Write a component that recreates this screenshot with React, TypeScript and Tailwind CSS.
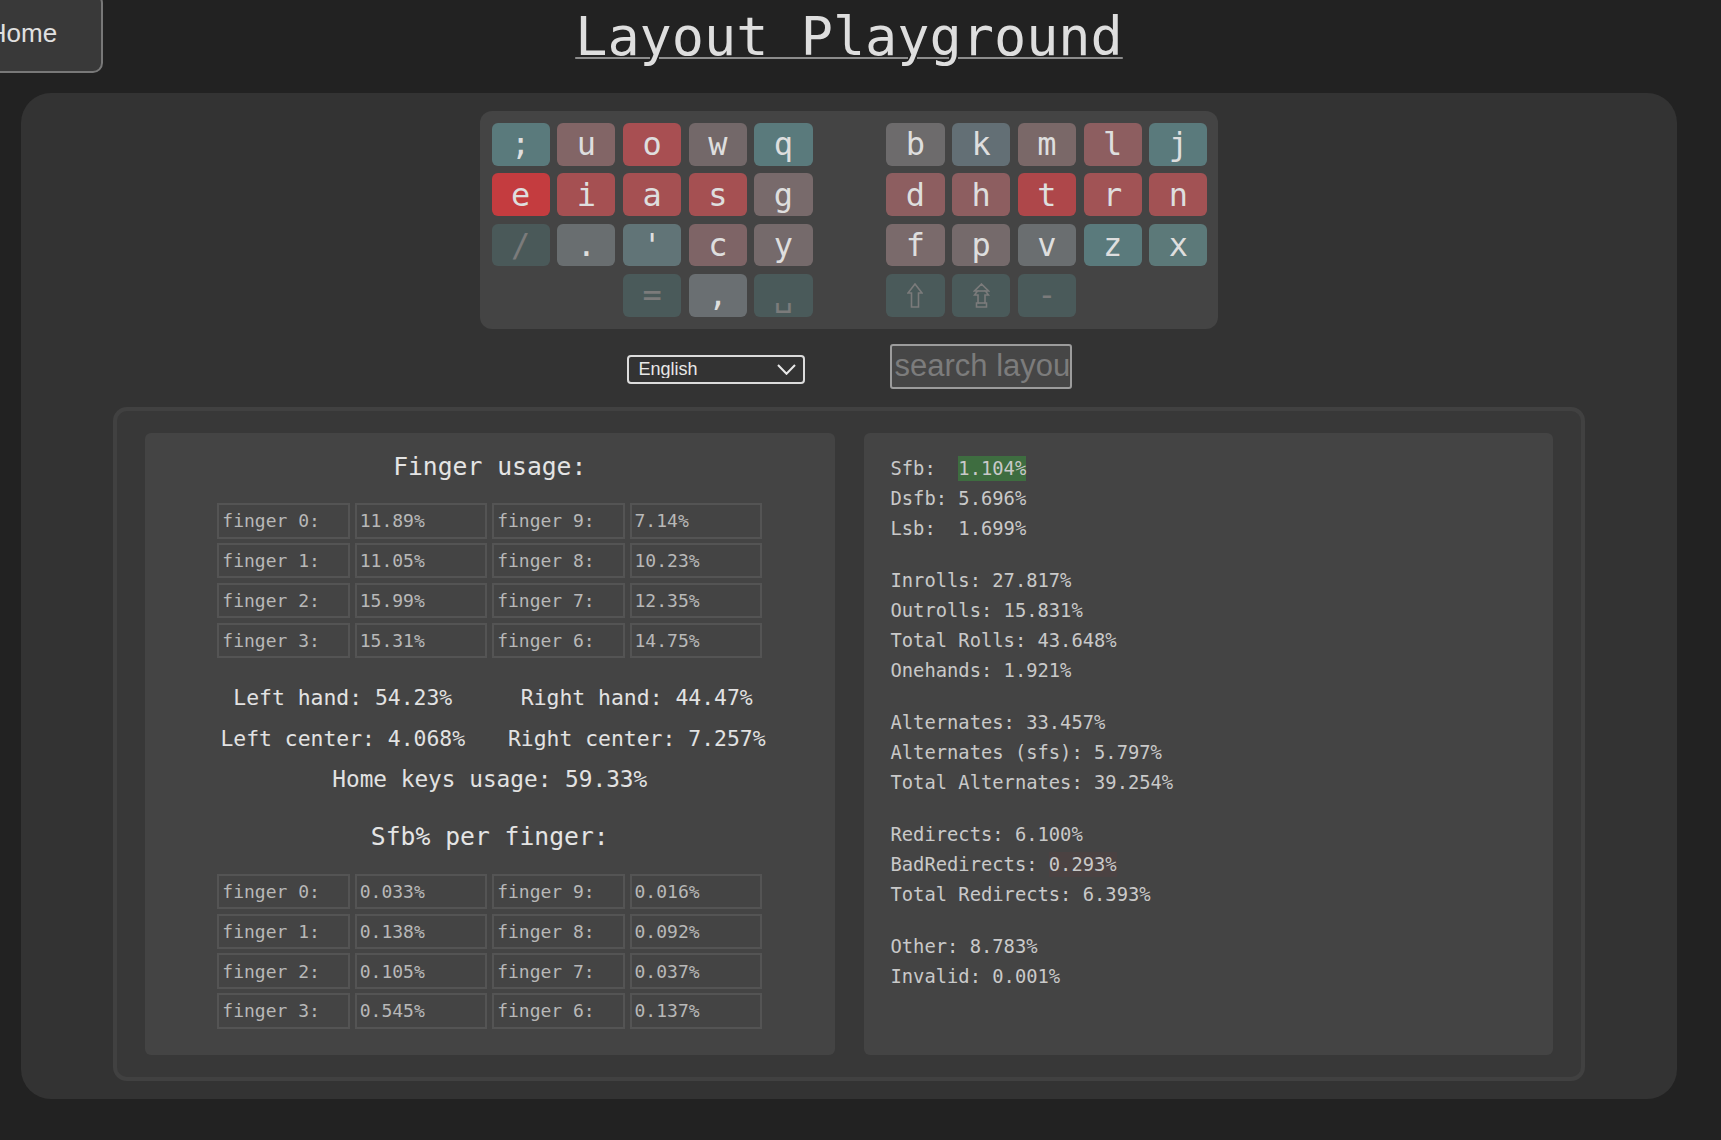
import React from 'react';

type Key = { c: React.ReactNode; bg: string; dim?: boolean } | null;

const ShiftIcon = () => (
  <svg width="16" height="25" viewBox="0 0 16 25" fill="none">
    <path d="M8 1 L15 10 H11.5 V24 H4.5 V10 H1 Z" stroke="#7b7b7b" strokeWidth="1.6" strokeLinejoin="miter" />
  </svg>
);

const CapsIcon = () => (
  <svg width="17" height="25" viewBox="0 0 17 25" fill="none">
    <path
      d="M8.5 1 L15.5 8 H12.5 L15.5 12 H12 V20 H13.5 V24 H3.5 V20 H5 V12 H1.5 L4.5 8 H1.5 Z"
      stroke="#7b7b7b"
      strokeWidth="1.6"
    />
    <path d="M4.5 8 H12.5" stroke="#7b7b7b" strokeWidth="1.6" />
    <path d="M5 20 H12" stroke="#7b7b7b" strokeWidth="1.6" />
  </svg>
);

const leftKeys: Key[][] = [
  [
    { c: ';', bg: 'bg-[#5a7a7c]' },
    { c: 'u', bg: 'bg-[#826566]' },
    { c: 'o', bg: 'bg-[#a84f52]' },
    { c: 'w', bg: 'bg-[#736869]' },
    { c: 'q', bg: 'bg-[#5a7a7c]' },
  ],
  [
    { c: 'e', bg: 'bg-[#c43c3f]' },
    { c: 'i', bg: 'bg-[#a55052]' },
    { c: 'a', bg: 'bg-[#a55052]' },
    { c: 's', bg: 'bg-[#a55052]' },
    { c: 'g', bg: 'bg-[#786a6b]' },
  ],
  [
    { c: '/', bg: 'bg-[#4a5959]', dim: true },
    { c: '.', bg: 'bg-[#696e70]' },
    { c: "'", bg: 'bg-[#617477]' },
    { c: 'c', bg: 'bg-[#7e6466]' },
    { c: 'y', bg: 'bg-[#756a6b]' },
  ],
  [
    null,
    null,
    { c: '=', bg: 'bg-[#4a5a5a]', dim: true },
    { c: ',', bg: 'bg-[#6a6f72]' },
    { c: '␣', bg: 'bg-[#4a5a5a]', dim: true },
  ],
];

const rightKeys: Key[][] = [
  [
    { c: 'b', bg: 'bg-[#6d6b6c]' },
    { c: 'k', bg: 'bg-[#636f75]' },
    { c: 'm', bg: 'bg-[#7a6868]' },
    { c: 'l', bg: 'bg-[#8d5e60]' },
    { c: 'j', bg: 'bg-[#5a7a7c]' },
  ],
  [
    { c: 'd', bg: 'bg-[#8d5e60]' },
    { c: 'h', bg: 'bg-[#8d5e60]' },
    { c: 't', bg: 'bg-[#ae474a]' },
    { c: 'r', bg: 'bg-[#a15355]' },
    { c: 'n', bg: 'bg-[#a25254]' },
  ],
  [
    { c: 'f', bg: 'bg-[#7a6a6b]' },
    { c: 'p', bg: 'bg-[#756a6b]' },
    { c: 'v', bg: 'bg-[#6a6e70]' },
    { c: 'z', bg: 'bg-[#5a7a7c]' },
    { c: 'x', bg: 'bg-[#5c7979]' },
  ],
  [
    { c: <ShiftIcon />, bg: 'bg-[#4a5a5a]', dim: true },
    { c: <CapsIcon />, bg: 'bg-[#4a5a5a]', dim: true },
    { c: '-', bg: 'bg-[#4a5a5a]', dim: true },
    null,
    null,
  ],
];

const usage = [
  ['finger 0:', '11.89%', 'finger 9:', '7.14%'],
  ['finger 1:', '11.05%', 'finger 8:', '10.23%'],
  ['finger 2:', '15.99%', 'finger 7:', '12.35%'],
  ['finger 3:', '15.31%', 'finger 6:', '14.75%'],
];

const sfbPerFinger = [
  ['finger 0:', '0.033%', 'finger 9:', '0.016%'],
  ['finger 1:', '0.138%', 'finger 8:', '0.092%'],
  ['finger 2:', '0.105%', 'finger 7:', '0.037%'],
  ['finger 3:', '0.545%', 'finger 6:', '0.137%'],
];

type Stat = { label: string; value: string; bg?: string };

const statGroups: Stat[][] = [
  [
    { label: 'Sfb:  ', value: '1.104%', bg: 'bg-[#3e6d40]' },
    { label: 'Dsfb: ', value: '5.696%' },
    { label: 'Lsb:  ', value: '1.699%' },
  ],
  [
    { label: 'Inrolls: ', value: '27.817%' },
    { label: 'Outrolls: ', value: '15.831%' },
    { label: 'Total Rolls: ', value: '43.648%' },
    { label: 'Onehands: ', value: '1.921%' },
  ],
  [
    { label: 'Alternates: ', value: '33.457%' },
    { label: 'Alternates (sfs): ', value: '5.797%' },
    { label: 'Total Alternates: ', value: '39.254%' },
  ],
  [
    { label: 'Redirects: ', value: '6.100%' },
    { label: 'BadRedirects: ', value: '0.293%', bg: 'bg-[#4b4242]' },
    { label: 'Total Redirects: ', value: '6.393%' },
  ],
  [
    { label: 'Other: ', value: '8.783%' },
    { label: 'Invalid: ', value: '0.001%' },
  ],
];

const KeyHalf = ({ rows }: { rows: Key[][] }) => (
  <div className="grid w-[321px] grid-cols-5 gap-x-[7.55px] gap-y-[7.6px]">
    {rows.flat().map((k, i) =>
      k ? (
        <div
          key={i}
          className={`flex h-[42.7px] items-center justify-center rounded-md text-[32px] leading-none ${k.bg} ${
            k.dim ? 'text-[#7b7b7b]' : 'text-[#dedede]'
          }`}
        >
          {k.c}
        </div>
      ) : (
        <div key={i} />
      )
    )}
  </div>
);

const FingerTable = ({ rows }: { rows: string[][] }) => (
  <div className="mx-auto grid w-fit grid-cols-[repeat(4,132.6px)] gap-x-[4.8px] gap-y-[4.5px]">
    {rows.flat().map((cell, i) => (
      <div
        key={i}
        className="flex h-[35.3px] items-center border-2 border-[#545454] pl-[3px] text-[18px] text-[#b8b8b8]"
      >
        {cell}
      </div>
    ))}
  </div>
);

export default function App() {
  return (
    <div className="min-h-screen w-full overflow-hidden bg-[#222222] font-['DejaVu_Sans_Mono',monospace]">
      <div className="ml-[21px] w-[1656px]">
        <header className="grid h-[93px] grid-cols-[1fr_auto_1fr]">
          <div>
            <button className="-ml-[79px] -mt-[7px] block h-[80px] w-[161px] rounded-[10px] border-2 border-[#787878] bg-[#393939] text-center font-['Liberation_Sans',Arial,sans-serif] text-[26px] text-[#e0e0e0]">
              Home
            </button>
          </div>
          <h1 className="mt-[10.4px] self-start text-[53.5px] leading-none text-[#dedede] underline decoration-[#8c8c8c] decoration-2 underline-offset-[2px]">
            Layout Playground
          </h1>
          <div />
        </header>

        <main className="rounded-[30px] bg-[#333333] px-[92px] py-[18px]">
          <div className="mx-auto flex w-fit gap-[73.8px] rounded-xl bg-[#444444] py-[12px] pl-[12px] pr-[11px]">
            <KeyHalf rows={leftKeys} />
            <KeyHalf rows={rightKeys} />
          </div>

          <div className="mb-[18px] mt-[15.7px] flex h-[44.4px] items-start justify-center gap-[85px] font-['Liberation_Sans',Arial,sans-serif]">
            <div className="relative mt-[10.7px] h-[28.7px] w-[178px]">
              <select className="h-full w-full appearance-none rounded-[4px] border-2 border-[#dcdcdc] bg-transparent pl-[10px] text-[18px] leading-none text-[#e8e8e8] outline-none">
                <option>English</option>
              </select>
              <svg
                className="pointer-events-none absolute right-[9px] top-[9px]"
                width="19"
                height="11"
                viewBox="0 0 19 11"
                fill="none"
              >
                <polyline points="1,1 9.5,9.8 18,1" stroke="#e8e8e8" strokeWidth="2" />
              </svg>
            </div>
            <input
              placeholder="search layout"
              className="h-[44.4px] w-[182px] rounded-[3px] border-2 border-[#9c9c9c] bg-[#464646] pl-[3px] text-[31px] text-[#dddddd] outline-none placeholder:text-[#7c7c7c]"
            />
          </div>

          <section className="grid grid-cols-2 gap-[29px] rounded-[14px] border-4 border-[#414141] bg-[#383838] px-[28px] py-[22.6px]">
            <div className="rounded-md bg-[#444444] pb-[26px] pt-[19px]">
              <h2 className="h-[30px] text-center text-[24.7px] leading-[30px] text-[#e4e4e4]">Finger usage:</h2>
              <div className="mt-[21px]">
                <FingerTable rows={usage} />
              </div>
              <div className="mt-[19.4px] text-[#e2e2e2]">
                <div className="flex justify-center text-[21.4px] leading-[41px]">
                  <div className="w-[294px] text-center">Left hand: 54.23%</div>
                  <div className="w-[294px] text-center">Right hand: 44.47%</div>
                </div>
                <div className="flex justify-center text-[21.4px] leading-[41px]">
                  <div className="w-[294px] text-center">Left center: 4.068%</div>
                  <div className="w-[294px] text-center">Right center: 7.257%</div>
                </div>
                <div className="text-center text-[22.75px] leading-[41px]">Home keys usage: 59.33%</div>
              </div>
              <h2 className="mt-[22px] h-[30px] text-center text-[24.7px] leading-[30px] text-[#e4e4e4]">
                Sfb% per finger:
              </h2>
              <div className="mt-[21.6px]">
                <FingerTable rows={sfbPerFinger} />
              </div>
            </div>

            <div className="rounded-md bg-[#444444] pl-[27px] pt-[21px] text-[18.8px] leading-[30px] text-[#c9c9c9]">
              {statGroups.map((group, gi) => (
                <div key={gi} className={gi > 0 ? 'mt-[22px]' : ''}>
                  {group.map((s) => (
                    <div key={s.label} className="whitespace-pre">
                      {s.label}
                      <span className={`inline-block leading-[25px] ${s.bg ?? ''}`}>{s.value}</span>
                    </div>
                  ))}
                </div>
              ))}
            </div>
          </section>
        </main>
      </div>
    </div>
  );
}
